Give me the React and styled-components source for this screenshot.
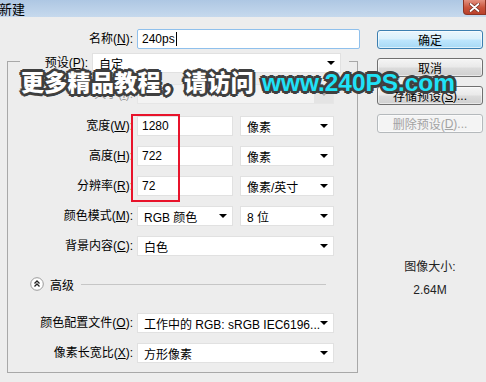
import React from "react";
import styled, { createGlobalStyle } from "styled-components";

const GlobalStyle = createGlobalStyle`
  html, body {
    margin: 0;
    padding: 0;
    background: #ededed;
  }
  body {
    font-family: "Liberation Sans", "Noto Sans CJK SC", sans-serif;
    font-size: 12px;
    color: #000;
  }
`;

const Window = styled.div`
  position: relative;
  width: 486px;
  height: 382px;
  overflow: hidden;
  background: #ededed;
`;

const TitleBar = styled.div`
  height: 17px;
  display: flex;
  align-items: flex-start;
  justify-content: space-between;
  background: linear-gradient(#aec7e3, #c6d9ed);
`;

const Title = styled.span`
  margin-left: -1px;
  font-family: "Noto Sans CJK SC", sans-serif;
  font-size: 13px;
  line-height: 17px;
`;

const CloseButton = styled.div`
  width: 23px;
  height: 15px;
  box-sizing: border-box;
  border: 1px solid #8c3424;
  border-top: none;
  border-radius: 0 0 0 4px;
  background: linear-gradient(#e39180, #c9533b 55%, #b9412b);
  display: flex;
  align-items: center;
  justify-content: center;
`;

const Body = styled.div`
  display: flex;
  align-items: flex-start;
`;

const FormPane = styled.div`
  width: 353px;
  padding: 12px 0 0 7px;
`;

const Label = styled.span`
  text-align: right;
  white-space: nowrap;
  line-height: 20px;
  color: ${(p) => (p.$disabled ? "#9d9d9d" : "#000")};
`;

const NameRow = styled.div`
  display: grid;
  grid-template-columns: 126px 223px;
  column-gap: 4px;
  height: 20px;
`;

const Input = styled.div`
  height: 20px;
  box-sizing: border-box;
  padding: 0 4px;
  display: flex;
  align-items: center;
  background: #fff;
  border: 1px solid ${(p) => (p.$focus ? "#8fc0ec" : "#e1e1e1")};
  border-radius: ${(p) => (p.$focus ? "2px" : "0")};
  white-space: nowrap;
`;

const Caret = styled.span`
  display: inline-block;
  width: 1px;
  height: 14px;
  margin-left: 1px;
  background: #000;
`;

const Select = styled.div`
  height: 20px;
  box-sizing: border-box;
  padding: 0 ${(p) => (p.$disabled ? "0" : "5px")} 0 6px;
  display: flex;
  align-items: center;
  justify-content: space-between;
  background: ${(p) => (p.$disabled ? "#f3f3f3" : "#fff")};
  border: 1px solid ${(p) => (p.$disabled ? "#e6e6e6" : "#e1e1e1")};
  white-space: nowrap;
  overflow: hidden;
`;

const ArrowBox = styled.span`
  display: flex;
  align-items: center;
  justify-content: center;
  width: ${(p) => (p.$disabled ? "19px" : "auto")};
  height: 100%;
  background: ${(p) => (p.$disabled ? "#e4e4e4" : "transparent")};
  &::after {
    content: "";
    border-left: 4px solid transparent;
    border-right: 4px solid transparent;
    border-top: 4px solid ${(p) => (p.$disabled ? "#a8a8a8" : "#000")};
  }
`;

const GroupBox = styled.div`
  width: 351px;
  box-sizing: border-box;
  margin-top: 12px;
  padding-bottom: 9px;
  border: 1px solid #a8a8a8;
`;

const PresetRow = styled.div`
  display: grid;
  grid-template-columns: 68px 249px;
  column-gap: 4px;
  margin: -9px 8px 0 12px;
  padding-right: 8px;
  background: #ededed;
`;

const Fields = styled.div`
  display: flex;
  flex-direction: column;
  gap: 10px;
  margin-top: ${(p) => p.$top}px;
`;

const Row = styled.div`
  display: grid;
  grid-template-columns: 125px 197px;
  column-gap: 4px;
  margin-bottom: ${(p) => p.$extra || 0}px;
`;

const Pair = styled.div`
  display: grid;
  grid-template-columns: 96px 94px;
  column-gap: 7px;
`;

const AdvancedRow = styled.div`
  display: flex;
  align-items: center;
  gap: 6px;
  height: 14px;
  margin: 21px 31px 0 22px;
`;

const Rule = styled.div`
  flex: 1;
  height: 1px;
  margin-left: 1px;
  background: #c6c6c6;
`;

const SidePane = styled.div`
  width: 106px;
  margin-left: 17px;
  padding-top: 13px;
  display: flex;
  flex-direction: column;
  gap: 9px;
`;

const Button = styled.div`
  height: 19px;
  box-sizing: border-box;
  display: flex;
  align-items: center;
  justify-content: center;
  border-radius: 3px;
  white-space: nowrap;
  border: 1px solid
    ${(p) => (p.$primary ? "#3c7fb1" : p.$disabled ? "#b5b9bc" : "#707070")};
  color: ${(p) => (p.$disabled ? "#a3a3a3" : "#000")};
  background: ${(p) =>
    p.$primary
      ? "linear-gradient(#eaf6fd, #d9f0fc 48%, #bee6fd 52%, #a7d9f5)"
      : p.$disabled
      ? "#f4f4f4"
      : "linear-gradient(#f5f5f5, #e9e9e9 48%, #dcdcdc 52%, #cfcfcf)"};
  box-shadow: inset 0 0 0 1px
    ${(p) => (p.$primary ? "rgba(255,255,255,0.6)" : "rgba(255,255,255,0.5)")};
`;

const SizeInfo = styled.div`
  margin-top: 118px;
  display: flex;
  flex-direction: column;
  align-items: center;
  gap: 9px;
  line-height: 14px;
  color: #222;
`;

const Watermark = styled.div`
  position: absolute;
  left: 21px;
  top: 66px;
  white-space: nowrap;
  font-family: "Noto Sans CJK SC", sans-serif;
  font-size: 23px;
  letter-spacing: 0.3px;
  font-weight: 900;
  line-height: 30px;
  color: #fff;
  text-shadow: 2px 0 0 #3f3f3f, -2px 0 0 #3f3f3f, 0 2px 0 #3f3f3f,
    0 -2px 0 #3f3f3f, 2px 2px 0 #3f3f3f, -2px -2px 0 #3f3f3f,
    2px -2px 0 #3f3f3f, -2px 2px 0 #3f3f3f, 3px 0 0 #3f3f3f,
    -3px 0 0 #3f3f3f, 0 3px 0 #3f3f3f, 0 -3px 0 #3f3f3f;
`;

const Url = styled.span`
  margin-left: 8px;
  font-family: "Liberation Sans", sans-serif;
  font-size: 24.4px;
  letter-spacing: 0;
  font-weight: bold;
  color: #1fe2f7;
`;

const Highlight = styled.div`
  position: absolute;
  left: 131px;
  top: 114px;
  width: 49px;
  height: 88px;
  box-sizing: border-box;
  border: 2px solid #e8132b;
`;

const Arrow = ({ disabled }) => <ArrowBox $disabled={disabled} />;

const CollapseIcon = () => (
  <svg width="14" height="14" viewBox="0 0 14 14">
    <circle cx="7" cy="7" r="6.3" fill="#fff" stroke="#9b9b9b" />
    <path d="M4.5 6.5 L7 4 L9.5 6.5 M4.5 9.5 L7 7 L9.5 9.5" fill="none" stroke="#222" strokeWidth="1.3" />
  </svg>
);

const CloseIcon = () => (
  <svg width="11" height="9" viewBox="0 0 11 9">
    <path d="M1.5 1 L9.5 8 M9.5 1 L1.5 8" stroke="#6d2a1f" strokeWidth="3.2" strokeLinecap="round" />
    <path d="M1.5 1 L9.5 8 M9.5 1 L1.5 8" stroke="#fff" strokeWidth="1.8" strokeLinecap="round" />
  </svg>
);

const App = () => {
  const units = [
    { label: <>宽度(<u>W</u>):</>, value: "1280", unit: "像素" },
    { label: <>高度(<u>H</u>):</>, value: "722", unit: "像素" },
    { label: <>分辨率(<u>R</u>):</>, value: "72", unit: "像素/英寸" },
  ];
  return (
    <Window>
      <GlobalStyle />
      <TitleBar>
        <Title>新建</Title>
        <CloseButton>
          <CloseIcon />
        </CloseButton>
      </TitleBar>
      <Body>
        <FormPane>
          <NameRow>
            <Label>名称(<u>N</u>):</Label>
            <Input $focus>
              240ps
              <Caret />
            </Input>
          </NameRow>
          <GroupBox>
            <PresetRow>
              <Label>预设(<u>P</u>):</Label>
              <Select>
                自定
                <Arrow />
              </Select>
            </PresetRow>
            <Fields $top={11}>
              <Row $extra={2}>
                <Label $disabled>大小(<u>I</u>):</Label>
                <Select $disabled>
                  <span />
                  <Arrow disabled />
                </Select>
              </Row>
              {units.map((u, i) => (
                <Row key={i}>
                  <Label>{u.label}</Label>
                  <Pair>
                    <Input>{u.value}</Input>
                    <Select>
                      {u.unit}
                      <Arrow />
                    </Select>
                  </Pair>
                </Row>
              ))}
              <Row>
                <Label>颜色模式(<u>M</u>):</Label>
                <Pair>
                  <Select>
                    RGB 颜色
                    <Arrow />
                  </Select>
                  <Select>
                    8 位
                    <Arrow />
                  </Select>
                </Pair>
              </Row>
              <Row>
                <Label>背景内容(<u>C</u>):</Label>
                <Select>
                  白色
                  <Arrow />
                </Select>
              </Row>
            </Fields>
            <AdvancedRow>
              <CollapseIcon />
              <span>高级</span>
              <Rule />
            </AdvancedRow>
            <Fields $top={22}>
              <Row>
                <Label>颜色配置文件(<u>O</u>):</Label>
                <Select>
                  工作中的 RGB: sRGB IEC6196...
                  <Arrow />
                </Select>
              </Row>
              <Row>
                <Label>像素长宽比(<u>X</u>):</Label>
                <Select>
                  方形像素
                  <Arrow />
                </Select>
              </Row>
            </Fields>
          </GroupBox>
        </FormPane>
        <SidePane>
          <Button $primary>确定</Button>
          <Button>取消</Button>
          <Button>存储预设(<u>S</u>)...</Button>
          <Button $disabled>删除预设(<u>D</u>)...</Button>
          <SizeInfo>
            <span>图像大小:</span>
            <span>2.64M</span>
          </SizeInfo>
        </SidePane>
      </Body>
      <Watermark>
        更多精品教程，请访问
        <Url>www.240PS.com</Url>
      </Watermark>
      <Highlight />
    </Window>
  );
};

export default App;
